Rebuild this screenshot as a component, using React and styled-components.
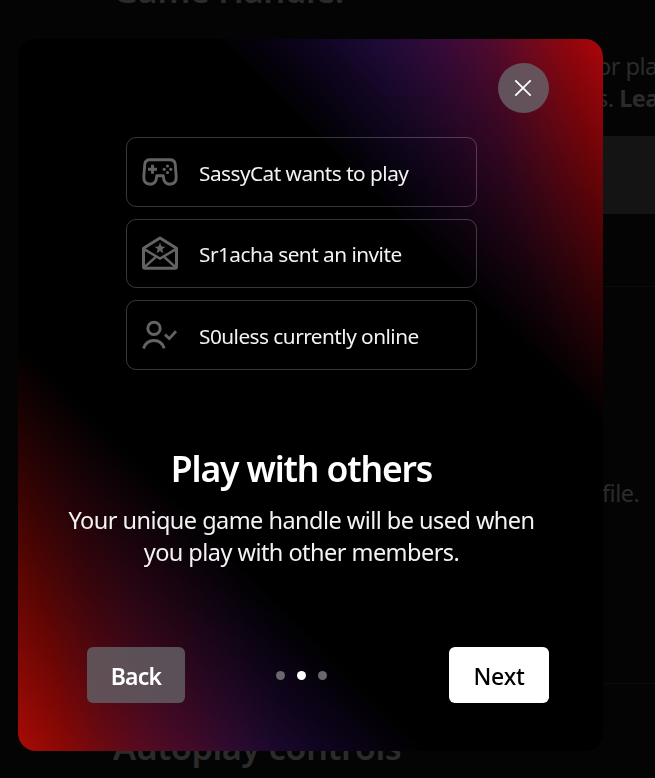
import React from "react";
import styled, { createGlobalStyle } from "styled-components";

const GlobalStyle = createGlobalStyle`
  * { box-sizing: border-box; }
  html, body { margin: 0; height: 100%; background: #040404; overflow: hidden; }
  body { font-family: "Noto Sans", "Open Sans", sans-serif; color: #fff; }
  h1, h2, p { margin: 0; }
`;

const Page = styled.main`
  width: 655px;
  height: 778px;
  overflow: hidden;
  color: #2b2b2b;
  display: grid;
  grid-template-rows: 50px 86px 78px 73px 397px 94px;
  white-space: nowrap;
`;

const PageHeading = styled.h2`
  align-self: start;
  padding-left: 113px;
  margin-top: ${(p) => p.$shift}px;
  font-size: 34.5px;
  line-height: 50px;
  font-weight: 600;
  letter-spacing: -0.5px;
`;

const PageText = styled.p`
  padding-left: ${(p) => p.$left}px;
  font-size: 23.5px;
  line-height: 32px;
  letter-spacing: -0.5px;
`;

const Field = styled.div`
  margin-left: 113px;
  background: #141414;
`;

const Section = styled.section`
  margin-left: 113px;
  border-bottom: 1px solid #0b0b0b;
  padding-top: ${(p) => p.$top || 0}px;
`;

const Dialog = styled.section`
  position: fixed;
  left: 18px;
  top: 39px;
  width: 585px;
  height: 712px;
  border-radius: 18px;
  overflow: hidden;
  display: flex;
  flex-direction: column;
  padding: 24px 54px 48px;
  background:
    linear-gradient(
      45deg,
      transparent 0,
      #000 290px,
      #000 calc(100% - 274px),
      transparent 100%
    ),
    linear-gradient(
      82deg,
      #aa0b05 0,
      #9c0905 45px,
      #860c1a 90px,
      #7a0f34 132px,
      #70124a 180px,
      #5c1568 222px,
      #46147a 262px,
      #3a1080 320px,
      #3a1080 calc(100% - 300px),
      #461884 calc(100% - 223px),
      #601160 calc(100% - 160px),
      #700e42 calc(100% - 113px),
      #8c0b24 calc(100% - 72px),
      #a0060c calc(100% - 32px),
      #ac060c 100%
    );
`;

const CloseButton = styled.button`
  align-self: flex-end;
  width: 51px;
  height: 50px;
  padding: 0 1px 0 0;
  border: 0;
  border-radius: 50%;
  background: rgba(102, 96, 102, 0.84);
  display: grid;
  place-items: center;
`;

const Feed = styled.ul`
  list-style: none;
  margin: 24px 0 0 54px;
  padding: 0;
  width: 351px;
  height: 233px;
  display: grid;
  grid-template-rows: repeat(3, 1fr);
  gap: 12px;
`;

const FeedItem = styled.li`
  border: 1px solid rgba(255, 255, 255, 0.22);
  border-radius: 10px;
  padding-left: 15px;
  display: flex;
  align-items: center;
  gap: 21px;
  color: #636363;
`;

const FeedIcon = styled.svg`
  width: 36px;
  height: 36px;
  margin-top: 2px;
  fill: none;
  stroke: currentColor;
`;

const FeedText = styled.span`
  color: #f3f3f3;
  font-size: 20.8px;
  line-height: 28px;
  padding-top: 2px;
  white-space: nowrap;
  letter-spacing: -0.53px;
`;

const Copy = styled.div`
  margin: 74px -2px 0 -20px;
  text-align: center;
`;

const Title = styled.h1`
  font-size: 35.5px;
  line-height: 48px;
  font-weight: 600;
  letter-spacing: -1.15px;
`;

const Description = styled.p`
  margin-top: 12px;
  font-size: 23.5px;
  line-height: 32px;
  color: #f3f3f3;
  letter-spacing: -0.54px;
`;

const Line = styled.span`
  display: block;
  white-space: nowrap;
`;

const Footer = styled.footer`
  margin-top: auto;
  padding-left: 15px;
  display: flex;
  align-items: center;
  justify-content: space-between;
`;

const Button = styled.button`
  width: ${(p) => (p.$primary ? 100 : 98)}px;
  height: 56px;
  padding: 2px 0 0;
  border: 0;
  border-radius: 6px;
  font-family: inherit;
  font-size: 23px;
  font-weight: ${(p) => (p.$primary ? 500 : 600)};
  letter-spacing: ${(p) => (p.$primary ? -0.2 : -0.8)}px;
  line-height: 32px;
  color: ${(p) => (p.$primary ? "#000" : "#fff")};
  background: ${(p) => (p.$primary ? "#fff" : "rgba(98, 92, 98, 0.86)")};
`;

const Dots = styled.div`
  display: flex;
  gap: 12px;
  margin-left: -32px;
`;

const Dot = styled.i`
  width: 9px;
  height: 9px;
  border-radius: 50%;
  background: ${(p) => (p.$active ? "#fff" : "#6b6670")};
`;

const GamepadIcon = () => (
  <FeedIcon viewBox="0 0 36 36">
    <path
      strokeWidth="2.9"
      strokeLinejoin="round"
      d="M8 4.7H28Q32.6 4.7 33.2 9L34.2 21.5Q34.5 24.7 33 27Q31 29.3 27.6 29.3Q23.5 29 22 25.2L21.2 20.8H14.8L14 25.2Q12.5 29 8.4 29.3Q5 29.3 3 27Q1.5 24.7 1.8 21.5L2.8 9Q3.4 4.7 8 4.7Z"
    />
    <path strokeWidth="2.9" d="M10.5 9.7V18.7M6 14.2H15" />
    <g fill="currentColor" stroke="none">
      <circle cx="25.5" cy="11" r="1.6" />
      <circle cx="25.5" cy="17.5" r="1.6" />
      <circle cx="22.2" cy="14.3" r="1.6" />
      <circle cx="28.8" cy="14.3" r="1.6" />
    </g>
  </FeedIcon>
);

const InviteIcon = () => (
  <FeedIcon viewBox="0 0 36 36">
    <path
      strokeWidth="3"
      strokeLinejoin="round"
      d="M1.5 12.2L18 2L34.5 12.2V30.8Q34.5 32.2 33 32.2H3Q1.5 32.2 1.5 30.8Z"
    />
    <path strokeWidth="2.6" d="M2 13.2L18 22.6L34 13.2M2.2 31.4L14.2 20.6M33.8 31.4L21.8 20.6" />
    <path
      fill="currentColor"
      stroke="none"
      d="M18 6.6L19.5 10.6L23.4 10.8L20.3 13.3L21.4 17.2L18 15.1L14.6 17.2L15.7 13.3L12.6 10.8L16.5 10.6Z"
    />
  </FeedIcon>
);

const OnlineIcon = () => (
  <FeedIcon viewBox="0 0 36 36" strokeWidth="3">
    <circle cx="12" cy="10.4" r="6.2" />
    <path d="M1.5 30.4Q4.2 22.6 12 22.6Q19.6 22.6 22.2 30.4" />
    <path strokeWidth="2.8" d="M23 16.6L27.3 20.6L34 13.2" />
  </FeedIcon>
);

const CloseIcon = () => (
  <svg width="18" height="18" viewBox="0 0 18 18" fill="none" stroke="#fff" strokeWidth="1.8">
    <path d="M1.3 1.3L16.7 16.7M16.7 1.3L1.3 16.7" />
  </svg>
);

const feed = [
  { Icon: GamepadIcon, text: "SassyCat wants to play" },
  { Icon: InviteIcon, text: "Sr1acha sent an invite" },
  { Icon: OnlineIcon, text: "S0uless currently online" },
];

export default function App() {
  return (
    <>
      <GlobalStyle />
      <Page>
        <PageHeading $shift={-35}>Game Handle.</PageHeading>
        <div>
          <PageText $left={597}>or play</PageText>
          <PageText $left={597}>
            s. <b>Learn</b>
          </PageText>
        </div>
        <Field />
        <Section />
        <Section $top={190}>
          <PageText $left={489}>file.</PageText>
        </Section>
        <PageHeading $shift={38}>Autoplay controls</PageHeading>
      </Page>
      <Dialog role="dialog" aria-labelledby="dialog-title">
        <CloseButton aria-label="Close">
          <CloseIcon />
        </CloseButton>
        <Feed>
          {feed.map(({ Icon, text }) => (
            <FeedItem key={text}>
              <Icon />
              <FeedText>{text}</FeedText>
            </FeedItem>
          ))}
        </Feed>
        <Copy>
          <Title id="dialog-title">Play with others</Title>
          <Description>
            <Line>Your unique game handle will be used when</Line>
            <Line>you play with other members.</Line>
          </Description>
        </Copy>
        <Footer>
          <Button>Back</Button>
          <Dots>
            <Dot />
            <Dot $active />
            <Dot />
          </Dots>
          <Button $primary>Next</Button>
        </Footer>
      </Dialog>
    </>
  );
}
